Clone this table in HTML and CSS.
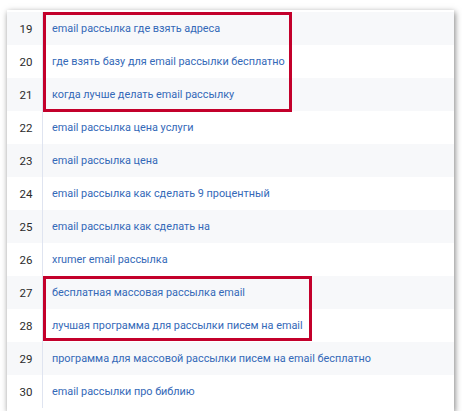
FILE: index.html
```html
<!DOCTYPE html>
<html lang="ru">
<head>
<meta charset="utf-8">
<link rel="stylesheet" href="styles.css">
</head>
<body>
<div class="card">
  <div class="group hl-a">
    <div class="row odd"><span class="num">19</span><a class="kw">email рассылка где взять адреса</a></div>
    <div class="row"><span class="num">20</span><a class="kw">где взять базу для email рассылки бесплатно</a></div>
    <div class="row odd"><span class="num">21</span><a class="kw">когда лучше делать email рассылку</a></div>
  </div>
  <div class="row"><span class="num">22</span><a class="kw">email рассылка цена услуги</a></div>
  <div class="row odd"><span class="num">23</span><a class="kw">email рассылка цена</a></div>
  <div class="row"><span class="num">24</span><a class="kw">email рассылка как сделать 9 процентный</a></div>
  <div class="row odd"><span class="num">25</span><a class="kw">email рассылка как сделать на</a></div>
  <div class="row"><span class="num">26</span><a class="kw">xrumer email рассылка</a></div>
  <div class="group hl-b">
    <div class="row odd"><span class="num">27</span><a class="kw">бесплатная массовая рассылка email</a></div>
    <div class="row"><span class="num">28</span><a class="kw">лучшая программа для рассылки писем на email</a></div>
  </div>
  <div class="row odd"><span class="num">29</span><a class="kw">программа для массовой рассылки писем на email бесплатно</a></div>
  <div class="row"><span class="num">30</span><a class="kw">email рассылки про библию</a></div>
</div>
</body>
</html>
```

FILE: styles.css
```css
html, body {
  margin: 0;
  padding: 0;
  background: #ffffff;
}

body {
  font-family: Roboto, "Noto Sans", Arial, sans-serif;
}

.card {
  margin: 10px 0 0 7px;
  width: 447px;
  padding: 2px 0 3px;
  background: #ffffff;
  box-shadow: 1px 2px 6px rgba(0, 0, 0, 0.5);
  display: flex;
  flex-direction: column;
}

.group {
  position: relative;
  display: flex;
  flex-direction: column;
}

.group::after {
  content: "";
  position: absolute;
  left: 36px;
  top: 0;
  bottom: 0;
  border: 3px solid #c3002b;
  box-sizing: border-box;
  pointer-events: none;
}

.hl-a::after { width: 249px; bottom: -1px; }
.hl-b::after { width: 269px; bottom: 1px; }

.row {
  height: 33px;
  display: flex;
  align-items: center;
  background: #ffffff;
}

.row.odd {
  background: #f7f8fa;
}

.num {
  width: 36px;
  flex: none;
  align-self: stretch;
  display: flex;
  align-items: center;
  justify-content: center;
  box-sizing: border-box;
  border-right: 1px solid #dfe4f0;
  font-size: 11.5px;
  color: #2b2b2b;
  padding-left: 3px;
}

.kw {
  padding-left: 9px;
  font-size: 10.85px;
  color: #3469b8;
  white-space: nowrap;
  text-decoration: none;
}
```
